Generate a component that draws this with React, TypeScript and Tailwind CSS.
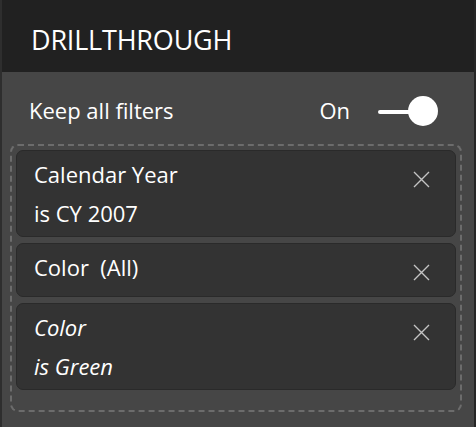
import React from 'react';

type Filter = {
  label: string;
  value?: string;
  italic?: boolean;
};

const filters: Filter[] = [
  { label: 'Calendar Year', value: 'is CY 2007' },
  { label: 'Color\u00a0\u00a0(All)' },
  { label: 'Color', value: 'is Green', italic: true },
];

const CloseIcon: React.FC = () => (
  <svg width="17" height="17" viewBox="0 0 17 17" className="shrink-0">
    <path d="M1 1 L16 16 M16 1 L1 16" stroke="#c4c4c4" strokeWidth="1.4" fill="none" />
  </svg>
);

const FilterCard: React.FC<{ filter: Filter }> = ({ filter }) => (
  <div className="flex min-h-[54px] rounded-[7px] border border-[#2a2a2a] bg-[#333333] pl-[17px] pt-[4px] pb-[3px]">
    <div className={`flex-1 text-[22px] leading-[39px] text-white ${filter.italic ? 'italic' : ''}`}>
      <div>{filter.label}</div>
      {filter.value && <div>{filter.value}</div>}
    </div>
    <div className="mt-[16px] mr-[25px]">
      <CloseIcon />
    </div>
  </div>
);

const App: React.FC = () => {
  return (
    <div
      className="w-[476px] h-[427px] overflow-hidden border-l-2 border-r-2 border-l-[#2e2e2e] border-r-[#262626] bg-[#464646] text-white"
      style={{ fontFamily: '"Open Sans", "Noto Sans", sans-serif' }}
    >
      <div className="h-[72px] bg-[#212121] pl-[29px] pt-[22px]">
        <h2 className="text-[27px] leading-[36px] tracking-[-0.2px] text-white">DRILLTHROUGH</h2>
      </div>

      <div className="flex items-center justify-between pl-[27px] pr-[36px] pt-[24px] pb-[18px]">
        <span className="text-[22px] leading-[30px] -mt-[2px]">Keep all filters</span>
        <div className="flex items-center gap-[28px]">
          <span className="text-[22px] leading-[30px] -mt-[2px]">On</span>
          <div className="relative h-[30px] w-[60px]">
            <div className="absolute left-0 top-[14px] h-[4px] w-[36px] rounded-full bg-white" />
            <div className="absolute right-0 top-0 h-[30px] w-[30px] rounded-full bg-white" />
          </div>
        </div>
      </div>

      <div className="ml-[8px] mr-[12px] flex flex-col gap-[6px] rounded-[8px] border-2 border-dashed border-[#6c6c6c] px-[4px] pt-[4px] pb-[20px]">
        {filters.map((f, i) => (
          <FilterCard key={i} filter={f} />
        ))}
      </div>
    </div>
  );
};

export default App;
